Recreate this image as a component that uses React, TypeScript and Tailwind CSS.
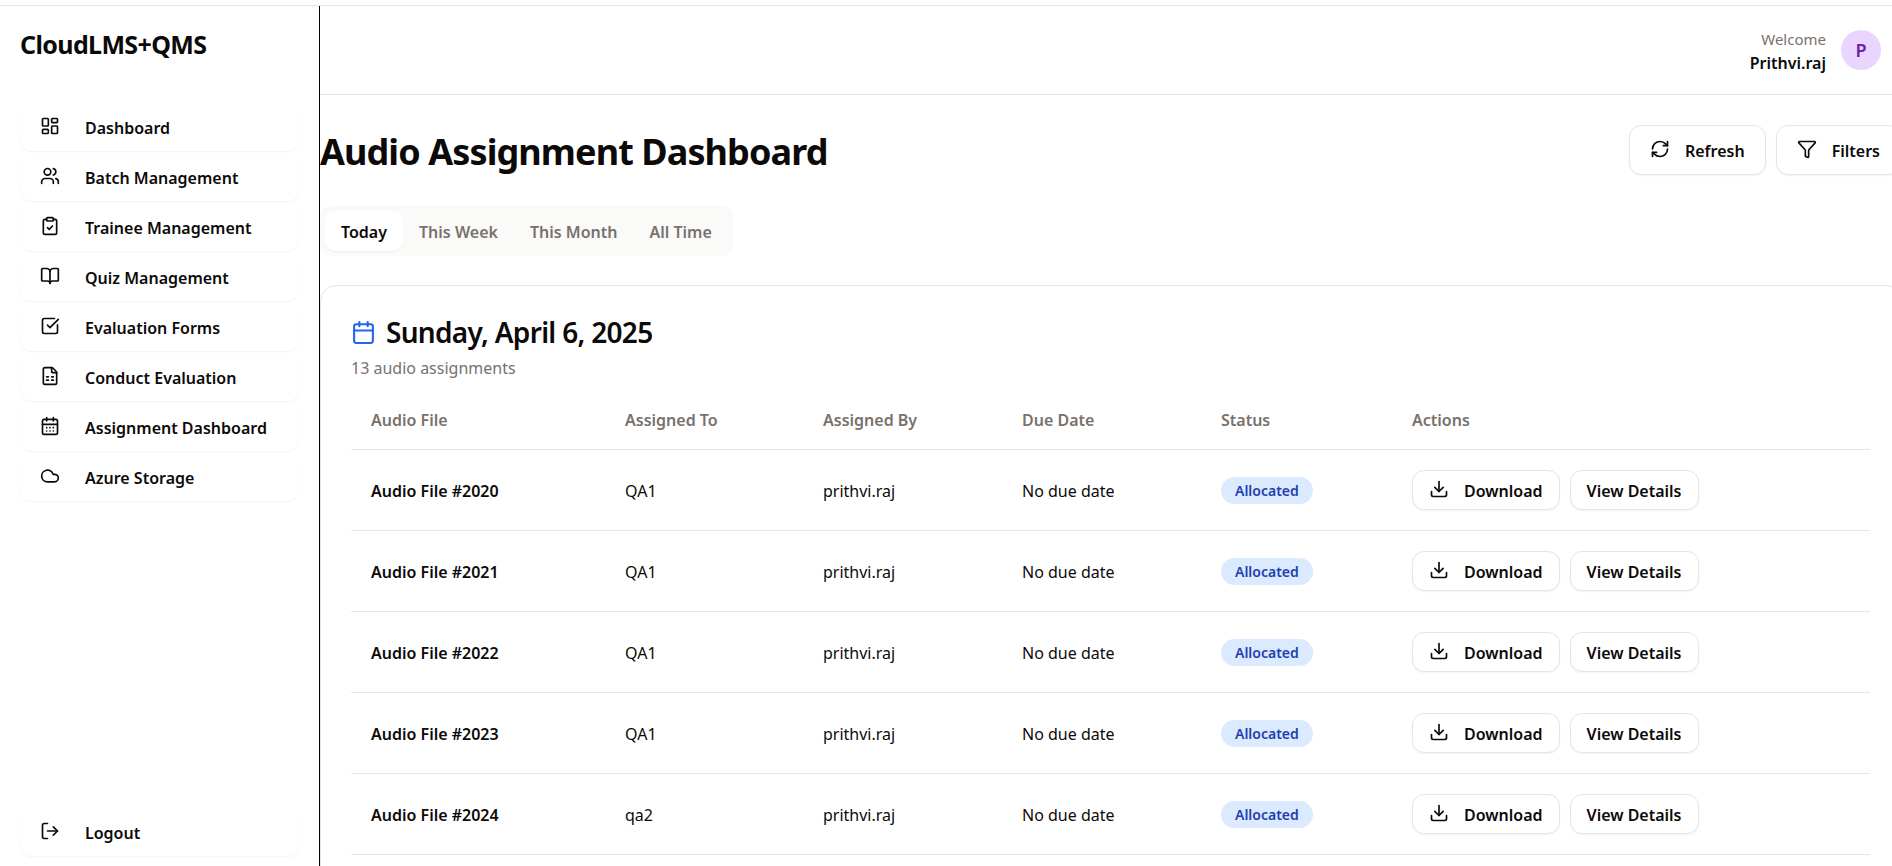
import {
  BookOpen, Calendar, CalendarDays, ClipboardCheck, Cloud, Download, FileSpreadsheet,
  Filter, LayoutDashboard, LogOut, RefreshCw, SquareCheckBig, Users,
} from "lucide-react";

const navItems = [
  { label: "Dashboard", icon: LayoutDashboard },
  { label: "Batch Management", icon: Users },
  { label: "Trainee Management", icon: ClipboardCheck },
  { label: "Quiz Management", icon: BookOpen },
  { label: "Evaluation Forms", icon: SquareCheckBig },
  { label: "Conduct Evaluation", icon: FileSpreadsheet },
  { label: "Assignment Dashboard", icon: CalendarDays },
  { label: "Azure Storage", icon: Cloud },
];

const ranges = ["Today", "This Week", "This Month", "All Time"];

const assignments = [
  { id: 2020, to: "QA1" },
  { id: 2021, to: "QA1" },
  { id: 2022, to: "QA1" },
  { id: 2023, to: "QA1" },
  { id: 2024, to: "qa2" },
];

const navClass =
  "flex h-[50px] w-full items-center gap-[25px] rounded-xl px-5 pt-1 text-left font-semibold shadow-[0_1px_2px_rgba(0,0,0,0.05)]";
const outlineButton =
  "inline-flex items-center rounded-xl border border-[#e5e5e5] bg-white pt-0.5 font-semibold shadow-[0_1px_2px_rgba(0,0,0,0.05)]";

function Sidebar() {
  return (
    <aside className="flex w-80 shrink-0 flex-col border-r border-black px-5 pb-2.5">
      <div className="pt-[18px] text-[25px] leading-10 font-bold tracking-tight">CloudLMS+QMS</div>
      <nav className="mt-[37px] flex flex-col">
        {navItems.map(({ label, icon: Icon }) => (
          <a key={label} href="#" className={navClass}>
            <Icon size={20} className="mb-1" />
            {label}
          </a>
        ))}
      </nav>
      <button type="button" className={navClass + " mt-auto"}>
        <LogOut size={20} className="mb-1" />
        Logout
      </button>
    </aside>
  );
}

function Header() {
  return (
    <header className="flex h-[89px] items-center justify-end gap-[15px] border-b border-[#e5e5e5] px-5">
      <div className="pt-0.5 text-right">
        <div className="text-[15px] leading-6 text-[#78716c]">Welcome</div>
        <div className="leading-6 font-semibold">Prithvi.raj</div>
      </div>
      <div className="flex size-10 items-center justify-center rounded-full bg-[#e9d5ff] text-lg font-semibold text-[#6b21a8]">
        P
      </div>
    </header>
  );
}

function AssignmentTable() {
  const head = "h-[59px] px-5 pt-0.5 text-left font-semibold";
  const cell = "h-[81px] px-5 pt-0.5";
  return (
    <table className="w-full table-fixed border-collapse">
      <colgroup>
        <col className="w-[254px]" />
        <col className="w-[198px]" />
        <col className="w-[199px]" />
        <col className="w-[199px]" />
        <col className="w-[191px]" />
        <col />
      </colgroup>
      <thead>
        <tr className="border-b border-[#e5e5e5] text-[#78716c]">
          <th className={head}>Audio File</th>
          <th className={head}>Assigned To</th>
          <th className={head}>Assigned By</th>
          <th className={head}>Due Date</th>
          <th className={head}>Status</th>
          <th className={head}>Actions</th>
        </tr>
      </thead>
      <tbody>
        {assignments.map(({ id, to }) => (
          <tr key={id} className="border-b border-[#e5e5e5]">
            <td className={cell + " font-semibold"}>Audio File #{id}</td>
            <td className={cell}>{to}</td>
            <td className={cell}>prithvi.raj</td>
            <td className={cell}>No due date</td>
            <td className={cell}>
              <span className="inline-flex h-[27px] items-center rounded-full bg-[#dbeafe] px-3.5 text-sm font-semibold text-[#1e40af]">
                Allocated
              </span>
            </td>
            <td className="h-[81px] px-5">
              <div className="flex gap-2.5">
                <button type="button" className={outlineButton + " h-10 gap-[15px] px-4"}>
                  <Download size={20} className="mb-1" />
                  Download
                </button>
                <button type="button" className={outlineButton + " h-10 px-4"}>
                  View Details
                </button>
              </div>
            </td>
          </tr>
        ))}
      </tbody>
    </table>
  );
}

export default function App() {
  return (
    <div className="h-screen overflow-hidden bg-white pt-[5px] font-['Noto_Sans',sans-serif] text-base text-[#0c0a09]">
      <div className="flex h-full border-t border-[#e5e5e5]">
        <Sidebar />
        <div className="-mr-[9px] min-w-0 flex-1">
          <Header />
          <main className="pt-[30px]">
            <div className="flex items-center justify-between">
              <h1 className="pt-1 text-4xl leading-[46px] font-bold tracking-tight">Audio Assignment Dashboard</h1>
              <div className="flex gap-2.5">
                <button type="button" className={outlineButton + " h-[50px] gap-[15px] px-5"}>
                  <RefreshCw size={20} className="mb-1" />
                  Refresh
                </button>
                <button type="button" className={outlineButton + " h-[50px] gap-[15px] px-5"}>
                  <Filter size={20} className="mb-1" />
                  Filters
                </button>
              </div>
            </div>
            <div role="tablist" className="mt-[30px] inline-flex h-[51px] items-center rounded-xl bg-[#fafaf9] p-[5px] font-semibold text-[#78716c]">
              {ranges.map((range, i) => (
                <button
                  key={range}
                  type="button"
                  role="tab"
                  aria-selected={i === 0}
                  className={
                    i === 0
                      ? "h-10 rounded-[10px] bg-white px-4 pt-0.5 text-[#0c0a09] shadow-[0_1px_2px_rgba(0,0,0,0.05)]"
                      : "h-10 rounded-[10px] px-4 pt-0.5"
                  }
                >
                  {range}
                </button>
              ))}
            </div>
            <section className="mt-[29px] rounded-2xl border border-[#e5e5e5] px-[30px] pt-[30px] pb-[30px]">
              <div className="flex items-center gap-2.5">
                <Calendar size={25} className="text-[#2563eb]" />
                <h2 className="text-[28px] leading-8 font-semibold tracking-tight">Sunday, April 6, 2025</h2>
              </div>
              <p className="mt-2 leading-6 text-[#78716c]">13 audio assignments</p>
              <div className="mt-2.5">
                <AssignmentTable />
              </div>
            </section>
          </main>
        </div>
      </div>
    </div>
  );
}
